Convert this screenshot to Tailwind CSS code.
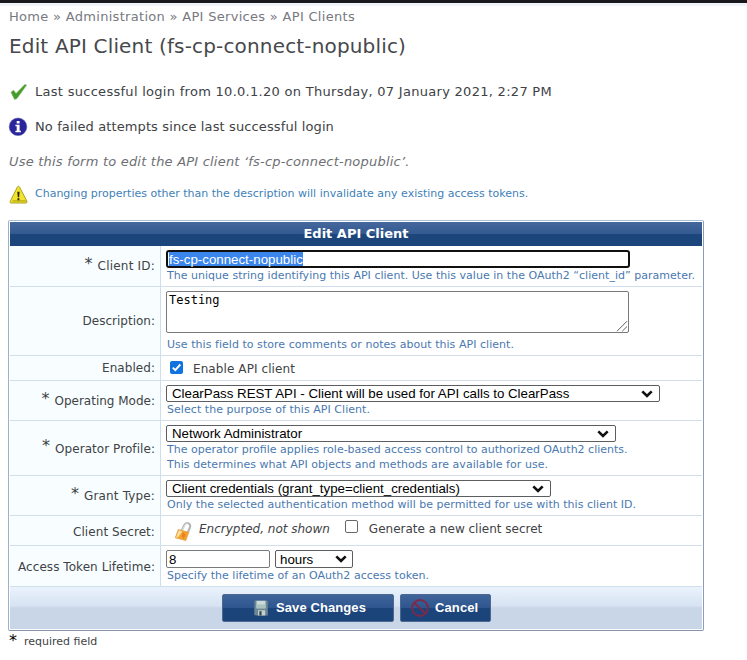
<!DOCTYPE html>
<html lang="en">
<head>
<meta charset="utf-8">
<title>Edit API Client</title>
<script src="https://cdn.jsdelivr.net/npm/@tailwindcss/browser@4"></script>
</head>
<body class="h-[660px] w-[747px] overflow-hidden bg-white font-['DejaVu_Sans',Verdana,sans-serif] text-[12px] leading-[15px] text-[#404246]">
<div class="h-[3px] bg-[#19191d]"></div>
<div class="h-[3px] bg-[#f0f4fa]"></div>
<main class="pl-2">
  <nav class="mt-0.5 h-5 pl-px text-[13px] leading-[18px] tracking-[0.304px] whitespace-nowrap text-[#77797f]">Home » Administration » API Services » API Clients</nav>
  <h1 class="mt-1 h-7 pl-px text-[20px] leading-[28px] tracking-[0.161px] whitespace-nowrap text-[#46484c]">Edit API Client (fs-cp-connect-nopublic)</h1>

  <div class="mt-[21px] flex h-5 items-center text-[13px] tracking-[0.286px] whitespace-nowrap">
    <svg class="mr-2 size-5 shrink-0" viewBox="0 0 20 20"><path d="M3 11.2 5.6 9.3 8 12.6 16.8 3.6 18.6 4.1 8.9 17.6 6.6 18.4Z" fill="#459a2c" stroke="#78b957" stroke-width=".7"/></svg>
    <span class="-ml-px">Last successful login from 10.0.1.20 on Thursday, 07 January 2021, 2:27 PM</span>
  </div>
  <div class="mt-[15px] flex h-5 items-center text-[13px] tracking-[0.117px] whitespace-nowrap">
    <svg class="mr-2 size-5 shrink-0" viewBox="0 0 20 20"><circle cx="10" cy="10.8" r="8.8" fill="#29259a" stroke="#5a59ad" stroke-width=".6"/><path d="M8.7 4.9h2.9v2.5H8.7zM7.4 8.8h4.2v6h1.3v1.5H7.4v-1.5h1.3v-4.5H7.4z" fill="#fff"/></svg>
    <span class="-ml-px">No failed attempts since last successful login</span>
  </div>
  <p class="mt-4 h-5 pl-px text-[13px] leading-5 tracking-[0.21px] whitespace-nowrap text-[#6d6f74] italic">Use this form to edit the API client ‘fs-cp-connect-nopublic’.</p>
  <div class="mt-3 flex h-5 items-center text-[11px] whitespace-nowrap text-[#417fb9]">
    <svg class="mt-0.5 mr-2 size-5 shrink-0" viewBox="0 0 20 20"><path d="M10.2 1.4Q10.8 1 11.5 2L19 16.4Q19.3 18 18 18H3Q1.6 17.8 2.2 16.4L9.4 2Q9.7 1.4 10.2 1.4Z" fill="#f2e32b" stroke="#aaa127" stroke-width="1"/><path d="M4 16.8H18.2L17.4 15H5Z" fill="#c6b81d"/><path d="M9.3 6.7h2.3l-.5 5.6H9.8zM9.5 13.3h1.9v1.9H9.5z" fill="#28240c"/></svg>
    <span class="-mt-0.5 -ml-px">Changing properties other than the description will invalidate any existing access tokens.</span>
  </div>

  <form class="mt-4 h-[411px] w-[696px] rounded-[2px] border border-t-[#a8bfd8] border-r-[#8d9cba] border-b-[#8795ab] border-l-[#9db0c9] p-px">
    <div class="h-6 bg-linear-to-b from-[#45679c] from-0% via-[#335a91] via-50% to-[#1c467b] to-52% pt-px text-center text-[13px] leading-[22px] font-bold text-white">Edit API Client</div>

    <div class="flex h-[41px] border-b border-[#d0dfeb]">
      <div class="flex w-[151px] shrink-0 items-center justify-end border-r border-[#cddfee] bg-[#f8feff] pr-[5px]"><span class="-mt-1 mr-[5px] text-[16px] leading-none">*</span><span class="tracking-[0.2px]">Client ID:</span></div>
      <div class="pt-1 pl-[6px]">
        <div class="-ml-px h-[18px] w-[464px] rounded-[3px] border-2 border-[#101010] bg-white pl-px font-['Liberation_Sans',Arial,sans-serif] text-[13.3px] leading-[15px]"><span class="inline-block h-[14px] bg-[#3b86ec] leading-[16px] text-white">fs-cp-connect-nopublic</span></div>
        <div class="text-[11px] tracking-[0.021px] whitespace-nowrap text-[#4a79b0]">The unique string identifying this API client. Use this value in the OAuth2 “client_id” parameter.</div>
      </div>
    </div>

    <div class="flex h-[69px] border-b border-[#d0dfeb]">
      <div class="flex w-[151px] shrink-0 items-center justify-end border-r border-[#cddfee] bg-[#f8feff] pt-px pr-[5px]">Description:</div>
      <div class="pt-1 pl-[5px]">
        <div class="relative h-[42px] w-[463px] rounded-[2px] border border-[#77797c] bg-white pt-px pl-0.5 font-['DejaVu_Sans_Mono',monospace] text-[12px] text-black">Testing
          <svg class="absolute right-0 bottom-0 size-3" viewBox="0 0 12 12"><path d="M1 11.2 11 1.2M6.3 11.2 11 6.5" stroke="#606060" stroke-width="1" fill="none"/></svg>
        </div>
        <div class="mt-1 ml-px text-[11px] tracking-[0.041px] whitespace-nowrap text-[#4a79b0]">Use this field to store comments or notes about this API client.</div>
      </div>
    </div>

    <div class="flex h-[25px] border-b border-[#d0dfeb]">
      <div class="flex w-[151px] shrink-0 items-center justify-end border-r border-[#cddfee] bg-[#f8feff] pt-px pr-[5px] tracking-[0.058px]">Enabled:</div>
      <div class="flex items-center pl-[9px]">
        <svg class="-mt-0.5 size-[13px]" viewBox="0 0 13 13"><rect width="13" height="13" rx="2" fill="#1173df"/><path d="M2.8 6.7 5.3 9.2 10.3 3.5" stroke="#fff" stroke-width="1.9" fill="none"/></svg>
        <span class="mt-0.5 ml-[10px] tracking-[0.091px]">Enable API client</span>
      </div>
    </div>

    <div class="flex h-10 border-b border-[#d0dfeb]">
      <div class="flex w-[151px] shrink-0 items-center justify-end border-r border-[#cddfee] bg-[#f8feff] pr-[5px]"><span class="-mt-1 mr-[5px] text-[16px] leading-none">*</span><span class="mt-0.5">Operating Mode:</span></div>
      <div class="pt-1 pl-[5px]">
        <div class="flex h-[17px] w-[494px] items-center justify-between rounded-[2px] border border-[#5b5d60] bg-white pr-1.5 pl-[5px] font-['Liberation_Sans',Arial,sans-serif] text-[13.3px] text-black"><span>ClearPass REST API - Client will be used for API calls to ClearPass</span><svg class="h-2 w-3" viewBox="0 0 12 8"><path d="M1.3 1.3 6 6 10.7 1.3" stroke="#111" stroke-width="2.6" fill="none"/></svg></div>
        <div class="ml-px text-[11px] tracking-[0.051px] whitespace-nowrap text-[#4a79b0]">Select the purpose of this API Client.</div>
      </div>
    </div>

    <div class="flex h-[55px] border-b border-[#d0dfeb]">
      <div class="flex w-[151px] shrink-0 items-center justify-end border-r border-[#cddfee] bg-[#f8feff] pr-[5px]"><span class="-mt-1 mr-[5px] text-[16px] leading-none">*</span><span class="mt-0.5 tracking-[0.066px]">Operator Profile:</span></div>
      <div class="pt-1 pl-[5px]">
        <div class="flex h-[17px] w-[450px] items-center justify-between rounded-[2px] border border-[#5b5d60] bg-white pr-1.5 pl-[5px] font-['Liberation_Sans',Arial,sans-serif] text-[13.3px] text-black"><span>Network Administrator</span><svg class="h-2 w-3" viewBox="0 0 12 8"><path d="M1.3 1.3 6 6 10.7 1.3" stroke="#111" stroke-width="2.6" fill="none"/></svg></div>
        <div class="ml-px text-[11px] whitespace-nowrap text-[#4a79b0]">The operator profile applies role-based access control to authorized OAuth2 clients.<br><span class="tracking-[0.04px]">This determines what API objects and methods are available for use.</span></div>
      </div>
    </div>

    <div class="flex h-10 border-b border-[#d0dfeb]">
      <div class="flex w-[151px] shrink-0 items-center justify-end border-r border-[#cddfee] bg-[#f8feff] pr-[5px]"><span class="-mt-1 mr-[5px] text-[16px] leading-none">*</span><span class="mt-0.5 tracking-[0.153px]">Grant Type:</span></div>
      <div class="pt-1 pl-[5px]">
        <div class="flex h-[17px] w-[385px] items-center justify-between rounded-[2px] border border-[#5b5d60] bg-white pr-1.5 pl-[5px] font-['Liberation_Sans',Arial,sans-serif] text-[13.3px] text-black"><span>Client credentials (grant_type=client_credentials)</span><svg class="h-2 w-3" viewBox="0 0 12 8"><path d="M1.3 1.3 6 6 10.7 1.3" stroke="#111" stroke-width="2.6" fill="none"/></svg></div>
        <div class="ml-px text-[11px] tracking-[0.022px] whitespace-nowrap text-[#4a79b0]">Only the selected authentication method will be permitted for use with this client ID.</div>
      </div>
    </div>

    <div class="flex h-[30px] border-b border-[#d0dfeb]">
      <div class="flex w-[151px] shrink-0 items-center justify-end border-r border-[#cddfee] bg-[#f8feff] pt-1 pr-[5px] tracking-[0.075px]">Client Secret:</div>
      <div class="flex items-center pl-[12px] whitespace-nowrap">
        <svg class="size-5" viewBox="0 0 20 20"><path d="M8.7 9.5 11.2 4.2Q12.8 1.3 15.3 2.3 18 3.5 16.9 6.5L14.8 11.5" stroke="#b4b7b5" stroke-width="2.1" fill="none"/><path d="M9.3 9.2 11.8 4.2Q13 2 15 2.9" stroke="#eceeed" stroke-width=".8" fill="none"/><path d="M5.3 8.5 15.8 11.3 12.8 19.5 2.3 16.8Z" fill="#f5a22c" stroke="#dc9a3c" stroke-width=".7"/><path d="M5.8 9.3 9.5 10.4 4.5 16.8 3.2 16.3Z" fill="#fbdf9b"/><path d="M9.8 10.8 12.6 14 10.6 18 8.8 15.2Z" fill="#ee7f20"/></svg>
        <span class="-mt-0.5 ml-[6px] italic">Encrypted, not shown</span>
        <span class="-mt-2 ml-[15px] size-[13px] rounded-[2px] border border-[#65676b] bg-white"></span>
        <span class="-mt-0.5 ml-[11px]">Generate a new client secret</span>
      </div>
    </div>

    <div class="flex h-[41px] border-b border-[#d0dfeb]">
      <div class="flex w-[151px] shrink-0 items-center justify-end border-r border-[#cddfee] bg-[#f8feff] pt-0.5 pr-[5px] tracking-[0.062px]">Access Token Lifetime:</div>
      <div class="pt-1 pl-[5px]">
        <div class="flex gap-[5px] font-['Liberation_Sans',Arial,sans-serif] text-[13.3px] text-black">
          <div class="h-[18px] w-[104px] rounded-[2px] border border-[#77797c] bg-white pl-0.5 leading-[18px]">8</div>
          <div class="flex h-[18px] w-[78px] items-center justify-between rounded-[2px] border border-[#5b5d60] bg-white pr-[5px] pl-1"><span>hours</span><svg class="h-2 w-3" viewBox="0 0 12 8"><path d="M1.3 1.3 6 6 10.7 1.3" stroke="#111" stroke-width="2.6" fill="none"/></svg></div>
        </div>
        <div class="ml-px text-[11px] tracking-[0.02px] whitespace-nowrap text-[#4a79b0]">Specify the lifetime of an OAuth2 access token.</div>
      </div>
    </div>

    <div class="flex h-[42px] gap-1.5 bg-linear-to-b from-[#eaf2fc] from-0% via-[#d7e3f3] via-45% to-[#c8d6e7] to-50% pt-[7px] pl-[212px] font-['Liberation_Sans',Arial,sans-serif] text-[13px] font-bold text-white">
      <div class="flex h-7 w-[172px] items-center rounded-[2px] border border-[#4c6991] bg-linear-to-b from-[#3f649c] from-0% via-[#2f568e] via-48% to-[#1b447a] to-52% pl-[28px]">
        <svg class="size-5" viewBox="0 0 20 20"><path d="M3.5 2.5H16Q17 3 16.8 4V17.5H4.5L3.2 16.3Z" fill="#6c8794"/><path d="M5.5 2.8h9v7.5h-9z" fill="#cad9da"/><path d="M5.5 6.5h9v3.8h-9z" fill="#a9c2bd"/><path d="M7 12.3h7.2v5.2H7z" fill="#c8d0cb"/><path d="M8.3 13.2h2.3v4.3H8.3z" fill="#33495d"/></svg>
        <span class="-mt-px ml-[5px] tracking-[0.094px]">Save Changes</span>
      </div>
      <div class="flex h-7 w-[91px] items-center rounded-[2px] border border-[#4c6991] bg-linear-to-b from-[#3f649c] from-0% via-[#2f568e] via-48% to-[#1b447a] to-52% pl-[9px]">
        <svg class="size-5" viewBox="0 0 20 20"><g fill="none" stroke="#7d2949"><circle cx="10" cy="10" r="7.9" stroke-width="2"/><path d="M4.3 4.8 15.5 15.5" stroke-width="2"/></g></svg>
        <span class="-mt-px ml-[5px] tracking-[0.12px]">Cancel</span>
      </div>
    </div>
  </form>

  <div class="flex items-start pl-px"><span class="mt-0.5 text-[16px] leading-4 text-black">*</span><span class="mt-[3px] ml-[7px] text-[11px]">required field</span></div>
</main>
</body>
</html>
